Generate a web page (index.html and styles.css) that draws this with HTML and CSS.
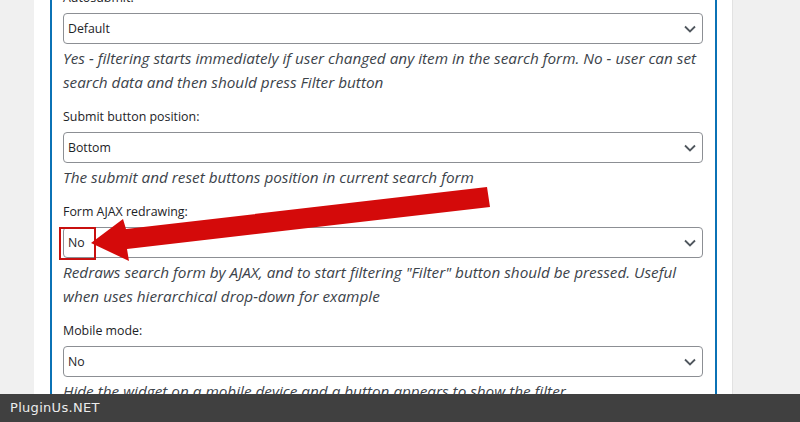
FILE: index.html
```html
<!DOCTYPE html>
<html>
<head>
  <title>Widget settings</title>
  <link rel="stylesheet" href="styles.css">
</head>
<body>

  <div class="panel">
    <div class="box">

      <div class="field">
        <label class="label">Autosubmit:</label>
        <div class="select">
          <span>Default</span>
          <svg class="chevron" width="12" height="8" viewBox="0 0 12 8"><path d="M1 1.5 L6 6.5 L11 1.5" fill="none" stroke="#50575e" stroke-width="1.8"/></svg>
        </div>
        <p class="desc">Yes - filtering starts immediately if user changed any item in the search form. No - user can set search data and then should press Filter button</p>
      </div>

      <div class="field">
        <label class="label">Submit button position:</label>
        <div class="select">
          <span>Bottom</span>
          <svg class="chevron" width="12" height="8" viewBox="0 0 12 8"><path d="M1 1.5 L6 6.5 L11 1.5" fill="none" stroke="#50575e" stroke-width="1.8"/></svg>
        </div>
        <p class="desc">The submit and reset buttons position in current search form</p>
      </div>

      <div class="field">
        <label class="label">Form AJAX redrawing:</label>
        <div class="select">
          <span>No</span>
          <svg class="chevron" width="12" height="8" viewBox="0 0 12 8"><path d="M1 1.5 L6 6.5 L11 1.5" fill="none" stroke="#50575e" stroke-width="1.8"/></svg>
        </div>
        <p class="desc">Redraws search form by AJAX, and to start filtering "Filter" button should be pressed. Useful when uses hierarchical drop-down for example</p>
      </div>

      <div class="field">
        <label class="label">Mobile mode:</label>
        <div class="select">
          <span>No</span>
          <svg class="chevron" width="12" height="8" viewBox="0 0 12 8"><path d="M1 1.5 L6 6.5 L11 1.5" fill="none" stroke="#50575e" stroke-width="1.8"/></svg>
        </div>
        <p class="desc">Hide the widget on a mobile device and a button appears to show the filter</p>
      </div>

    </div>
  </div>

  <!-- annotation over the screenshot -->
  <div class="mark"></div>
  <svg class="arrow" width="800" height="422" viewBox="0 0 800 422">
    <polygon points="91,243 123,219 126,229 487,187 490,207 127,249 129,261" fill="#d40a0a"/>
  </svg>

  <div class="footer">PluginUs.NET</div>

</body>
</html>
```

FILE: styles.css
```css
body {
  margin: 0;
  background: #f0f0f0;
  font-family: "Open Sans", "Noto Sans", sans-serif;
  height: 422px;
  overflow: hidden;
}
.panel {
  margin-left: 34px;
  width: 699px;
  height: 460px;
  background: #fff;
  border-right: 1px solid #e2e2e2;
  box-sizing: border-box;
  padding: 0 15px 0 16px;
}
.box {
  border-left: 2px solid #0b72b5;
  border-right: 2px solid #0b72b5;
  height: 100%;
  padding: 0 12px 0 11px;
  margin-top: -12px;
}
.field {
  margin-bottom: 13px;
}
.label {
  display: block;
  font-size: 12.4px;
  line-height: 20px;
  color: #1d2327;
  margin-bottom: 5px;
}
.select {
  height: 31px;
  box-sizing: border-box;
  border: 1px solid #8c8f94;
  border-radius: 4px;
  display: flex;
  align-items: center;
  justify-content: space-between;
  padding: 0 6px 0 4px;
  font-size: 12.3px;
  color: #1d2327;
}
.chevron {
  display: block;
}
.desc {
  margin: 2px 0 0;
  font-size: 15.3px;
  line-height: 24px;
  font-style: italic;
  color: #3c434a;
}
.mark {
  position: absolute;
  left: 59px;
  top: 227px;
  width: 37px;
  height: 33px;
  box-sizing: border-box;
  border: 2px solid #c8100f;
}
.arrow {
  position: absolute;
  left: 0;
  top: 0;
}
.footer {
  position: fixed;
  left: 0;
  bottom: 0;
  width: 100%;
  height: 28px;
  background: #404040;
  color: #ececec;
  font-family: "DejaVu Sans", sans-serif;
  font-size: 13px;
  letter-spacing: 0.3px;
  line-height: 28px;
  padding-left: 10px;
  box-sizing: border-box;
}
```
